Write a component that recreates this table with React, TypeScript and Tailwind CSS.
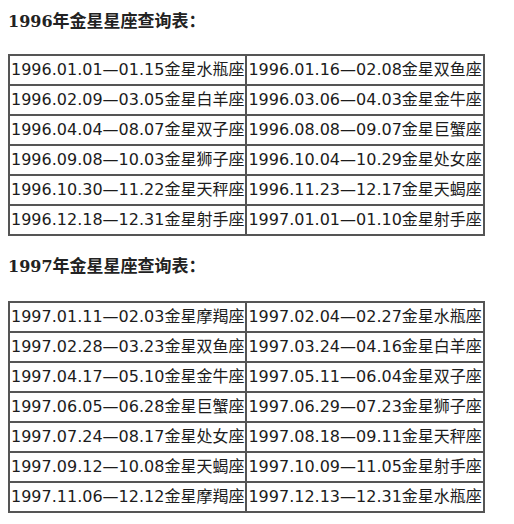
import React from "react";

const t1: [string, string][] = [
  ["1996.01.01—01.15金星水瓶座", "1996.01.16—02.08金星双鱼座"],
  ["1996.02.09—03.05金星白羊座", "1996.03.06—04.03金星金牛座"],
  ["1996.04.04—08.07金星双子座", "1996.08.08—09.07金星巨蟹座"],
  ["1996.09.08—10.03金星狮子座", "1996.10.04—10.29金星处女座"],
  ["1996.10.30—11.22金星天秤座", "1996.11.23—12.17金星天蝎座"],
  ["1996.12.18—12.31金星射手座", "1997.01.01—01.10金星射手座"],
];

const t2: [string, string][] = [
  ["1997.01.11—02.03金星摩羯座", "1997.02.04—02.27金星水瓶座"],
  ["1997.02.28—03.23金星双鱼座", "1997.03.24—04.16金星白羊座"],
  ["1997.04.17—05.10金星金牛座", "1997.05.11—06.04金星双子座"],
  ["1997.06.05—06.28金星巨蟹座", "1997.06.29—07.23金星狮子座"],
  ["1997.07.24—08.17金星处女座", "1997.08.18—09.11金星天秤座"],
  ["1997.09.12—10.08金星天蝎座", "1997.10.09—11.05金星射手座"],
  ["1997.11.06—12.12金星摩羯座", "1997.12.13—12.31金星水瓶座"],
];

function Heading({ year }: { year: string }) {
  return (
    <div className="font-bold text-[#222] text-[17px] leading-[24px] [font-family:'Noto_Sans_CJK_SC',sans-serif]">
      <span className="text-[16px] [font-family:'DejaVu_Serif',serif]">{year}</span>
      年金星星座查询表：
    </div>
  );
}

function Table({ rows }: { rows: [string, string][] }) {
  return (
    <table className="border-separate border-spacing-0 border border-[#555] text-[#1c1c1c] text-[16px] leading-[26px] [font-family:'DejaVu_Sans','Noto_Sans_CJK_SC',sans-serif]">
      <tbody>
        {rows.map((r, i) => (
          <tr key={i}>
            {r.map((c, j) => (
              <td key={j} className="border border-[#555] p-[1px] whitespace-nowrap">
                {c}
              </td>
            ))}
          </tr>
        ))}
      </tbody>
    </table>
  );
}

export default function App() {
  return (
    <div className="bg-white w-[514px] h-[524px] pl-[8px] pt-[8px]">
      <Heading year="1996" />
      <div className="mt-[20px]">
        <Table rows={t1} />
      </div>
      <div className="mt-[17px]">
        <Heading year="1997" />
      </div>
      <div className="mt-[22px]">
        <Table rows={t2} />
      </div>
    </div>
  );
}
